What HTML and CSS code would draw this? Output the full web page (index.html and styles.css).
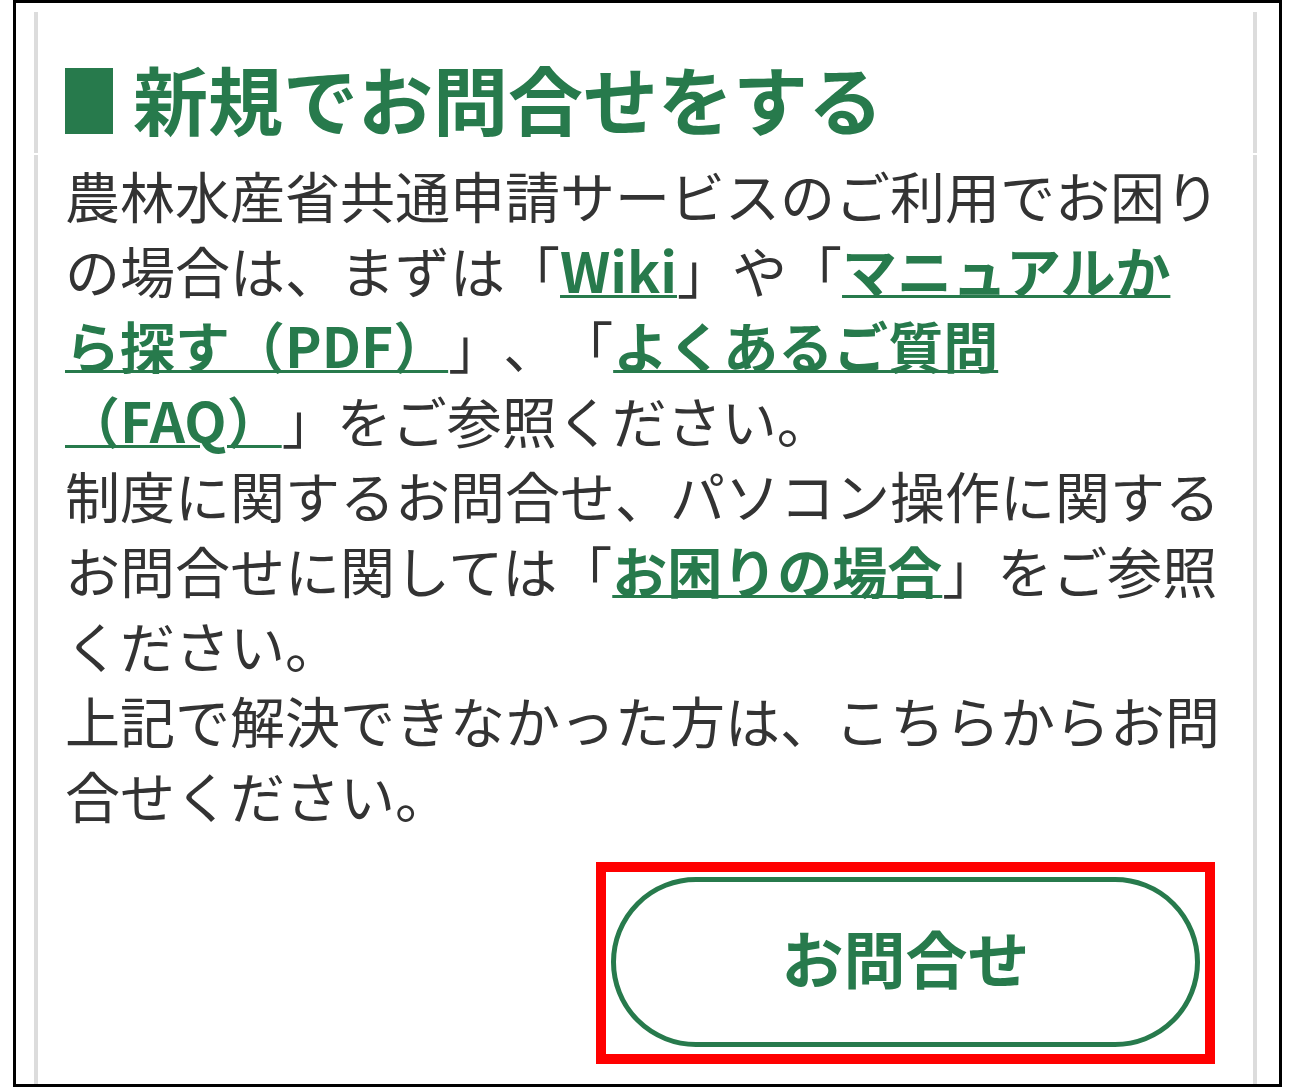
FILE: index.html
```html
<!DOCTYPE html>
<html lang="ja">
<head>
    <meta charset="UTF-8">
    <title>お問合せ</title>
    <link rel="stylesheet" href="styles.css">
</head>
<body>
    <div id="frame">
        <div class="panel">
            <h2 class="panel-title">新規でお問合せをする</h2>
            <div class="panel-body">
                <p class="panel-text">農林水産省共通申請サービスのご利用でお困りの場合は、まずは「<a href="#">Wiki</a>」や「<a href="#">マニュアルから探す（PDF）</a>」、「<a href="#">よくあるご質問（FAQ）</a>」をご参照ください。<br>制度に関するお問合せ、パソコン操作に関するお問合せに関しては「<a href="#">お困りの場合</a>」をご参照ください。<br>上記で解決できなかった方は、こちらからお問合せください。</p>
                <div class="btn-area">
                    <div class="btn-mark">
                        <a class="btn-contact" href="#">お問合せ</a>
                    </div>
                </div>
            </div>
        </div>
    </div>
</body>
</html>
```

FILE: styles.css
```css
*{
    margin: 0;
    padding: 0;
    box-sizing: border-box;
}
body{
    background: #fff;
    font-family: "Noto Sans CJK JP", "Noto Sans", sans-serif;
    color: #333;
    text-spacing-trim: space-all;
}
#frame{
    width: 1269px;
    height: 1087px;
    margin-left: 13px;
    border: 3px solid #000;
    display: flex;
    flex-direction: column;
}
.panel{
    flex: 1;
    margin: 9px 22px 0 18px;
    display: flex;
    flex-direction: column;
}
.panel-title{
    display: flex;
    align-items: center;
    gap: 20px;
    margin-bottom: 2px;
    padding: 41px 28px 10px 27px;
    border-left: 4px solid #dcdcdc;
    border-right: 4px solid #dcdcdc;
    font-size: 75px;
    line-height: 90px;
    font-weight: bold;
    color: #277a4c;
}
.panel-title::before{
    content: "";
    width: 48px;
    height: 66px;
    margin-top: 6px;
    background: #277a4c;
}
.panel-body{
    flex: 1;
    padding: 2px 28px 0 27px;
    border-left: 4px solid #dcdcdc;
    border-right: 4px solid #dcdcdc;
}
.panel-text{
    font-size: 55px;
    line-height: 75px;
}
.panel-text a{
    color: #277a4c;
    font-weight: bold;
    text-decoration: underline;
    text-decoration-thickness: 3px;
}
.btn-area{
    display: flex;
    justify-content: flex-end;
    margin-top: 30px;
    padding-right: 10px;
}
/* 赤枠 */
.btn-mark{
    border: 10px solid #f00;
    padding: 5px 5px 7px;
}
.btn-contact{
    display: flex;
    align-items: center;
    justify-content: center;
    width: 589px;
    height: 170px;
    padding-bottom: 10px;
    border: 5px solid #277a4c;
    border-radius: 85px;
    font-size: 62px;
    font-weight: bold;
    color: #277a4c;
    text-decoration: none;
}
```
